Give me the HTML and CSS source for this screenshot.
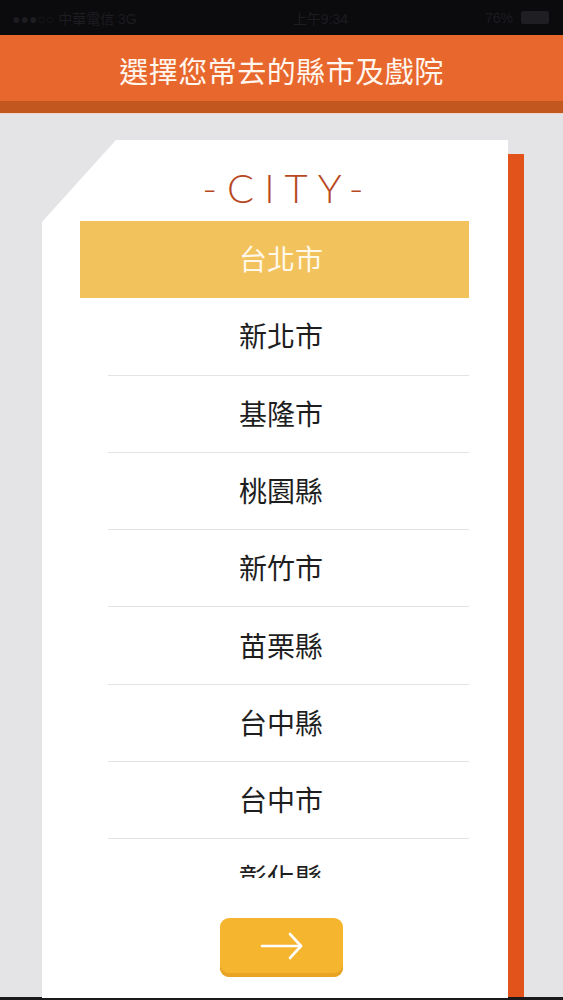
FILE: index.html
```html
<!DOCTYPE html>
<html lang="zh-Hant">
<head>
<meta charset="utf-8">
<title>選擇您常去的縣市及戲院</title>
<link rel="stylesheet" href="styles.css">
</head>
<body>
<div class="screen">
  <div class="statusbar">
    <span class="sb-left">●●●○○ 中華電信 3G</span>
    <span class="sb-mid">上午9:34</span>
    <span class="sb-right">76% <span class="battery"></span></span>
  </div>
  <header class="header">
    <h1 class="title">選擇您常去的縣市及戲院</h1>
  </header>
  <div class="header-band"></div>
  <main class="main">
    <div class="card-wrap">
      <section class="card">
        <div class="city">-CITY-</div>
        <div class="list">
          <div class="row selected">台北市</div>
          <div class="row">新北市</div>
          <div class="row">基隆市</div>
          <div class="row">桃園縣</div>
          <div class="row">新竹市</div>
          <div class="row">苗栗縣</div>
          <div class="row">台中縣</div>
          <div class="row">台中市</div>
          <div class="row">彰化縣</div>
          <div class="row">南投縣</div>
        </div>
        <div class="btn-area">
          <button class="next" type="button" aria-label="下一步">
            <svg width="44" height="28" viewBox="0 0 44 28" fill="none" stroke="#ffffff" stroke-width="2.6" stroke-linecap="round" stroke-linejoin="round">
              <path d="M2 14 H41"/>
              <path d="M30 2 L41 14 L30 26"/>
            </svg>
          </button>
        </div>
      </section>
      <div class="strip"></div>
    </div>
  </main>
  <div class="bottom-line"></div>
</div>
</body>
</html>
```

FILE: styles.css
```css
* { box-sizing: border-box; }
html, body { margin: 0; padding: 0; }
body {
  width: 563px;
  height: 1000px;
  overflow: hidden;
  background: #e4e4e6;
  font-family: "Noto Sans CJK TC", "Noto Sans", sans-serif;
}
.screen {
  display: flex;
  flex-direction: column;
  height: 1000px;
}
.statusbar {
  height: 35px;
  background: #0b0a0d;
  display: flex;
  align-items: center;
  justify-content: space-between;
  padding: 0 14px 0 12px;
  font-size: 14px;
  color: #1d1c20;
  font-family: "Liberation Sans", "Noto Sans CJK TC", sans-serif;
}
.sb-left { width: 190px; }
.sb-mid { width: 100px; text-align: center; }
.sb-right { width: 110px; display: flex; justify-content: flex-end; align-items: center; gap: 8px; }
.battery {
  display: inline-block;
  width: 28px;
  height: 13px;
  background: #1f1e22;
  border-radius: 2px;
}
.header {
  height: 66px;
  background: #e8672d;
  display: flex;
  align-items: center;
  justify-content: center;
  padding-top: 4px;
}
.title {
  margin: 0;
  font-size: 29px;
  font-weight: 400;
  color: #fff6ee;
  letter-spacing: 0.5px;
  line-height: 1;
}
.header-band {
  height: 12px;
  background: #c2571f;
  border-bottom: 1px solid #f3d6ca;
  box-sizing: content-box;
}
.main {
  flex: 1;
  padding-top: 26px;
  min-height: 0;
}
.card-wrap {
  display: flex;
  padding-left: 42px;
  height: 858px;
}
.card {
  width: 466px;
  height: 100%;
  background: #ffffff;
  clip-path: polygon(74px 0, 100% 0, 100% 100%, 0 100%, 0 82px);
  display: flex;
  flex-direction: column;
}
.strip {
  width: 16px;
  margin-top: 14px;
  height: calc(100% + 10px);
  background: #e1531b;
}
.city {
  height: 81px;
  padding-top: 28px;
  text-align: center;
  font-family: "Lato", "Liberation Sans", sans-serif;
  font-weight: 300;
  font-size: 40px;
  line-height: 1;
  letter-spacing: 10px;
  padding-left: 26px;
  color: #b8491f;
}
.list {
  margin: 0 39px 0 38px;
  height: 657px;
  overflow: hidden;
}
.row {
  height: 77.3px;
  display: flex;
  align-items: center;
  justify-content: center;
  padding-left: 13px;
  padding-bottom: 3px;
  font-size: 28px;
  color: #1e1e1e;
  position: relative;
}
.row::after {
  content: "";
  position: absolute;
  left: 28px;
  right: 0;
  bottom: 0;
  height: 1px;
  background: #e3e3e3;
}
.row.selected {
  background: #f2c25c;
  color: #fff8ea;
}
.row.selected::after { display: none; }
.btn-area {
  display: flex;
  justify-content: center;
  padding-top: 40px;
  padding-left: 13px;
}
.next {
  width: 123px;
  height: 59px;
  border: 0;
  border-radius: 9px;
  background: #f5b52f;
  box-shadow: inset 0 -4px 0 #e9a426;
  display: flex;
  align-items: center;
  justify-content: center;
  padding: 0 0 3px 0;
  cursor: pointer;
}
.bottom-line {
  height: 3px;
  background: #1a1a1c;
  margin-top: auto;
}
```
